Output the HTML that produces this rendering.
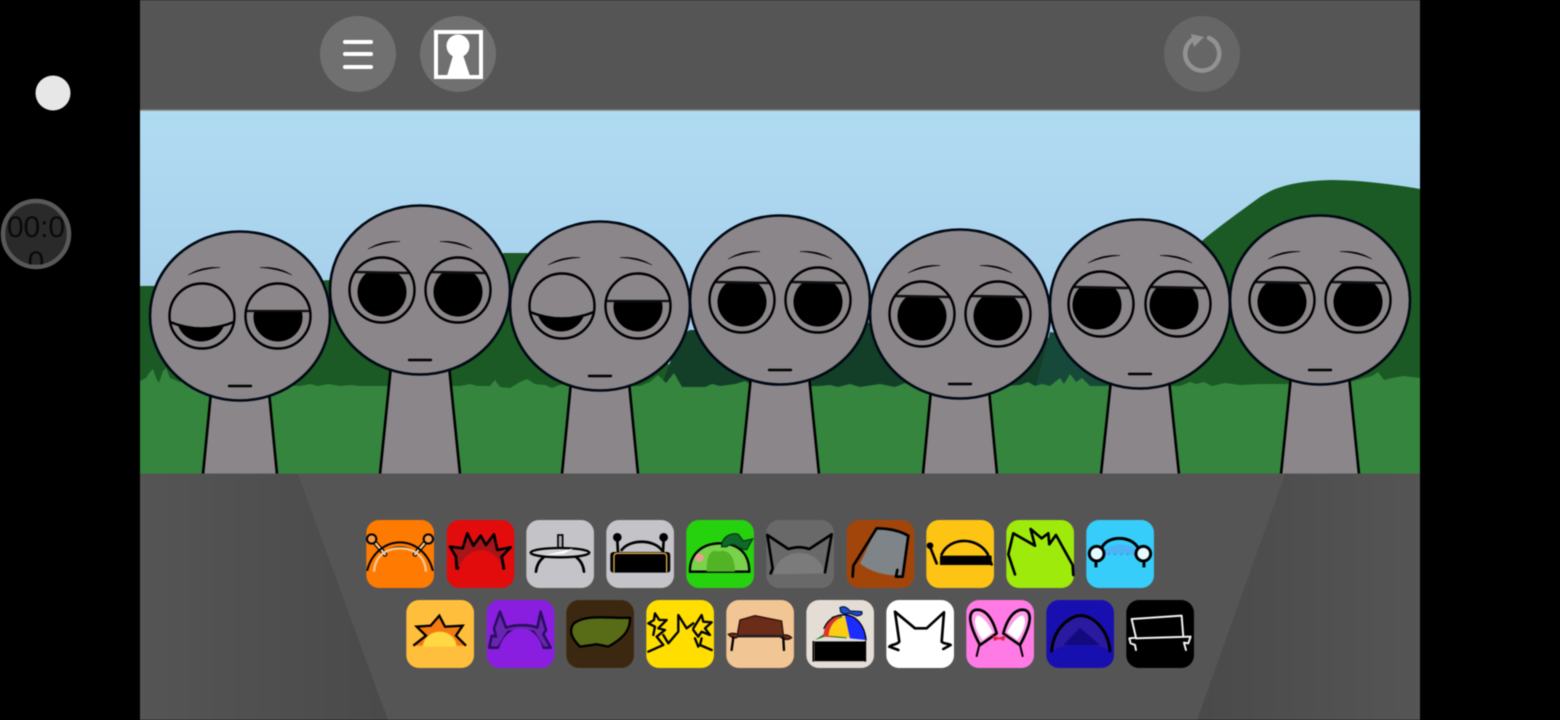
<!DOCTYPE html>
<html lang="en"><head><meta charset="utf-8"><title>Sprunki</title>
<style>
html,body{margin:0;padding:0;background:#000;width:1560px;height:720px;overflow:hidden}
svg{display:block;filter:blur(.45px)}
.s{fill:none;stroke:#000;stroke-width:8;stroke-linecap:round;stroke-linejoin:round}
</style></head><body>
<svg width="1560" height="720" viewBox="0 0 1560 720" xmlns="http://www.w3.org/2000/svg">
<defs>
<linearGradient id="sky" x1="0" y1="0" x2="0" y2="1"><stop offset="0" stop-color="#b0dcf2"/><stop offset="1" stop-color="#a0c4e6"/></linearGradient>
<linearGradient id="gl" x1="0" y1="0" x2="1" y2="0"><stop offset="0" stop-color="#555"/><stop offset="1" stop-color="#4a4a4a"/></linearGradient>
<linearGradient id="gr" x1="0" y1="0" x2="1" y2="0"><stop offset="0" stop-color="#4a4a4a"/><stop offset="1" stop-color="#555"/></linearGradient>
<clipPath id="tc"><circle cx="36" cy="234" r="31"/></clipPath>
<g id="head">
<ellipse cx="0" cy="0" rx="90" ry="84.5" fill="#8a8689" stroke="#000814" stroke-width="2.6"/>
<path d="M-52,-41 Q-38,-50 -20,-48.5 Q-37,-47.5 -52,-41Z M20,-48.5 Q38,-50 52,-41 Q37,-47.5 20,-48.5Z" fill="#000" stroke="#000" stroke-width=".4"/>
<path d="M-11,70 H11" stroke="#000" stroke-width="2.4" stroke-linecap="round"/>
</g>
<g id="eyeN">
<circle r="33" fill="#8a8689"/>
<circle cx="0" cy="2" r="24.5" fill="#000"/>
<path d="M-28.3,-17 A33,33 0 0 1 28.3,-17Z" fill="#8a8689"/>
<path d="M-27,-18 L27,-17" stroke="#111" stroke-width="2.4"/>
<circle r="32.5" fill="none" stroke="#000" stroke-width="2.4"/>
</g>
<g id="eyeW">
<circle r="33" fill="#8a8689"/>
<circle cx="-4" cy="1" r="24.5" fill="#000"/>
<path d="M-28.3,-17 A33,33 0 0 1 28.3,-17Z" fill="#8a8689"/>
<path d="M-27,-17 L27,-16" stroke="#111" stroke-width="2.4"/>
<circle r="32.5" fill="none" stroke="#000" stroke-width="2.4"/>
</g>
<g id="eyeH">
<circle r="33" fill="#8a8689"/>
<circle cx="0" cy="1" r="24.5" fill="#000"/>
<path d="M-32.6,-5 A33,33 0 0 1 32.6,-5Z" fill="#8a8689"/>
<path d="M-32,-5 H32" stroke="#111" stroke-width="2.2"/>
<circle r="32.5" fill="none" stroke="#000" stroke-width="2.4"/>
</g>
<g id="eyeC">
<circle r="33" fill="#8a8689"/>
<circle cx="-1" cy="1" r="24.5" fill="#000"/>
<path d="M32,5 A33,33 0 1 0 -32,5 Q0,18 32,5Z" fill="#8a8689"/>
<path d="M-32,6 Q0,19 32,6" fill="none" stroke="#000" stroke-width="2.4"/>
<circle r="32.5" fill="none" stroke="#000" stroke-width="2.4"/>
</g>
</defs>

<rect width="1560" height="720" fill="#000"/>
<!-- top bar -->
<rect x="140" y="0" width="1280" height="110" fill="#565556"/>
<circle cx="358" cy="54" r="38" fill="#707070"/>
<g fill="#fff"><rect x="343" y="40" width="30" height="4" rx="2"/><rect x="343" y="52" width="30" height="4" rx="2"/><rect x="343" y="65" width="30" height="4" rx="2"/></g>
<circle cx="458" cy="54" r="38" fill="#707070"/>
<rect x="436" y="32" width="45" height="45" fill="none" stroke="#fff" stroke-width="4"/>
<circle cx="458" cy="46" r="11.5" fill="#fff"/>
<path d="M454,52 H462 L470,76 H447Z" fill="#fff"/>
<circle cx="1202" cy="54" r="38" fill="#666"/>
<path d="M1209,38 A17,17 0 1 1 1192,40" fill="none" stroke="#929292" stroke-width="4.5" stroke-linecap="round"/>
<path d="M1191,34 L1204,37 L1194,47Z" fill="#929292"/>

<!-- scene -->
<rect x="140" y="110" width="1280" height="364" fill="url(#sky)"/>
<rect x="140" y="109.5" width="1280" height="1.5" fill="#8f9090"/>
<path d="M140,286 L250,285 L330,280 L420,262 L505,253 L527,253 L580,290 L640,330 L690,390 H140Z" fill="#1b5a24"/>
<path d="M660,390 L680,335 L690,330 L760,330 L880,322 L960,330 L1040,332 L1120,390Z" fill="#133f28"/>
<path d="M1035,390 L1050,332 L1110,340 L1130,390Z" fill="#17493a"/>
<path d="M1120,390 C1150,310 1175,265 1203,240 C1225,222 1245,208 1260,197 C1275,187 1295,181 1330,180 C1355,180 1385,183 1420,189 V390Z" fill="#1b5a24"/>
<path d="M140,381 L146,378 L150,372 L153,369 L156,378 L159,383 L163,371 L166,368 L170,378 L180,382 L300,386 L310,384 L318,386 L328,384 L340,386 L350,385 L360,386 L460,386 L470,384 L478,386 L490,386 L495,380 L500,387 L510,388 L520,382 L527,379 L535,384 L545,385 L552,388 L560,385 L575,381 L582,386 L592,382 L600,386 L640,386 L650,382 L658,375 L666,383 L674,373 L682,387 L705,387 L712,384 L720,386 L735,384 L745,381 L755,387 L820,386 L830,385 L838,387 L850,384 L860,387 L880,384 L895,387 L905,383 L915,386 L1000,386 L1020,385 L1028,382 L1035,386 L1042,384 L1050,386 L1060,378 L1064,384 L1070,374 L1076,382 L1082,378 L1090,386 L1180,386 L1190,382 L1196,384 L1204,382 L1212,386 L1225,383 L1240,385 L1260,384 L1290,384 L1350,382 L1372,376 L1378,372 L1384,380 L1392,378 L1404,376 L1420,378 V474 H140Z" fill="#35853f"/>

<!-- characters -->
<g stroke="#000" stroke-width="2.6" fill="#8a8689">
<path d="M211,390 L202,474 H278 L269,390Z" stroke="none"/><path d="M211,392 L203,474 M269,392 L277,474" fill="none"/>
<path d="M391,364 L380,474 H460 L449,364Z" stroke="none"/><path d="M391,366 L380,474 M449,366 L460,474" fill="none"/>
<path d="M571,380 L562,474 H638 L629,380Z" stroke="none"/><path d="M571,382 L562,474 M629,382 L638,474" fill="none"/>
<path d="M751,374 L741,474 H819 L809,374Z" stroke="none"/><path d="M751,376 L741,474 M809,376 L819,474" fill="none"/>
<path d="M931,388 L923,474 H997 L989,388Z" stroke="none"/><path d="M931,390 L923,474 M989,390 L997,474" fill="none"/>
<path d="M1111,378 L1101,474 H1179 L1169,378Z" stroke="none"/><path d="M1111,380 L1101,474 M1169,380 L1179,474" fill="none"/>
<path d="M1291,374 L1281,474 H1359 L1349,374Z" stroke="none"/><path d="M1291,376 L1281,474 M1349,376 L1359,474" fill="none"/>
</g>
<g transform="translate(240,316)"><use href="#head"/><use href="#eyeC" x="-38"/><use href="#eyeH" x="38"/></g>
<g transform="translate(420,290)"><use href="#head"/><use href="#eyeN" x="-38"/><use href="#eyeN" x="38"/></g>
<g transform="translate(600,306)"><use href="#head"/><use href="#eyeC" x="-38"/><use href="#eyeH" x="38"/></g>
<g transform="translate(780,300)"><use href="#head"/><use href="#eyeN" x="-38"/><use href="#eyeN" x="38"/></g>
<g transform="translate(960,314)"><use href="#head"/><use href="#eyeN" x="-38"/><use href="#eyeN" x="38"/></g>
<g transform="translate(1140,304)"><use href="#head"/><use href="#eyeW" x="-39"/><use href="#eyeW" x="38"/></g>
<g transform="translate(1320,300)"><use href="#head"/><use href="#eyeN" x="-38"/><use href="#eyeN" x="38"/></g>

<!-- bottom panel -->
<rect x="140" y="473.5" width="1280" height="246.5" fill="#565556"/>
<path d="M140,474 H298 L388,720 H140Z" fill="url(#gl)"/>
<path d="M1285,474 H1420 V720 H1197Z" fill="url(#gr)"/>

<!-- left overlay -->
<circle cx="53" cy="93" r="17.5" fill="#e8e7e8"/>
<circle cx="36" cy="234" r="33" fill="#2a2a2a" stroke="#595959" stroke-width="4.5"/>
<g clip-path="url(#tc)" fill="#0a0a0a" font-family="'Liberation Sans',sans-serif" font-size="30"><text x="36" y="237" text-anchor="middle" textLength="58">00:0</text><text x="36" y="272" text-anchor="middle">0</text></g>

<!-- row 1 tiles A -->
<g transform="translate(360,515) scale(.3333)">
<rect x="19" y="15" width="203" height="204" rx="38" fill="#ff7a00"/>
<rect x="260" y="15" width="203" height="204" rx="38" fill="#e20c0c"/>
<rect x="499" y="15" width="203" height="204" rx="38" fill="#c3c3c8"/>
<rect x="739" y="15" width="203" height="204" rx="38" fill="#c3c3c8"/>
<rect x="979" y="15" width="203" height="204" rx="38" fill="#26d20e"/>
<!-- 1 -->
<path d="M45,83 L75,118 M195,83 L165,118" stroke="#000" stroke-width="14" stroke-linecap="round"/>
<path d="M45,83 L75,118 M195,83 L165,118" stroke="#f7c896" stroke-width="7" stroke-linecap="round"/>
<g class="s" style="stroke-width:6">
<circle cx="35" cy="72" r="14" style="fill:#f59a45"/><circle cx="205" cy="72" r="14" style="fill:#f59a45"/>
<path d="M22,165 C35,115 75,82 120,82 C165,82 205,115 218,165"/>
<path d="M75,112 C100,92 140,92 165,112"/>
</g>
<path d="M42,170 C45,125 75,100 120,100 C165,100 195,125 198,170" fill="none" stroke="#f7c896" stroke-width="7"/>
<!-- 2 -->
<path class="s" style="fill:#a81418" d="M290,160 L288,125 L270,95 L308,100 L322,55 L340,92 L362,62 L378,90 L402,58 L412,105 L452,97 L425,125 L432,160 L400,160 C390,125 330,125 320,160Z"/>
<path d="M295,172 C300,122 345,105 362,105 C385,105 425,122 428,172Z" fill="#e20c0c"/>
<path class="s" d="M290,160 L288,125 M432,160 L425,125"/>
<!-- 3 -->
<rect x="594" y="60" width="14" height="44" fill="#aaa" stroke="#000" stroke-width="5"/>
<ellipse cx="600" cy="113" rx="88" ry="14" fill="#cfcfd3" stroke="#000" stroke-width="7"/>
<path d="M550,122 L640,100 L612,116Z" fill="#fff"/>
<path class="s" d="M528,170 C530,150 540,135 552,126 M672,170 C670,150 660,135 648,126"/>
<!-- 4 -->
<circle cx="772" cy="67" r="13"/><circle cx="911" cy="67" r="13"/>
<path class="s" d="M772,75 L774,112 M911,75 L909,112 M785,105 C810,72 880,72 905,105"/>
<rect x="752" y="112" width="178" height="60" rx="8" fill="#000" stroke="#000" stroke-width="2"/>
<path d="M762,172 V125 Q762,115 772,115 H910 Q920,115 920,125 V172" fill="none" stroke="#e0ad4a" stroke-width="4"/>
<!-- 5 -->
<path d="M990,170 C988,115 1030,85 1080,85 C1140,85 1168,120 1168,170Z" fill="#79d24a" stroke="#000" stroke-width="7"/>
<path d="M1040,170 C1040,125 1050,100 1075,110 C1105,100 1125,125 1125,170Z" fill="#52b327"/>
<circle cx="1018" cy="128" r="13" fill="#e8a090"/>
<path d="M1085,95 C1085,65 1115,52 1135,58 L1150,78 L1178,72 L1160,104 C1135,105 1125,75 1100,95Z" fill="#0f6a2a" stroke="#0a3a1a" stroke-width="4"/>
</g>

<!-- row 1 tiles B -->
<g transform="translate(760,515) scale(.3333)">
<rect x="19" y="15" width="203" height="204" rx="38" fill="#696969"/>
<rect x="260" y="15" width="203" height="204" rx="38" fill="#a1450a"/>
<rect x="499" y="15" width="203" height="204" rx="38" fill="#fdc414"/>
<rect x="739" y="15" width="203" height="204" rx="38" fill="#9eea0a"/>
<rect x="979" y="15" width="203" height="204" rx="38" fill="#36cdfb"/>
<!-- 6 -->
<path d="M40,178 C55,95 175,90 195,175Z" fill="#7b7b7b"/>
<path class="s" d="M32,175 L38,160 L22,60 L85,102 C110,95 125,95 148,102 L215,58 L195,172"/>
<!-- 7 -->
<path d="M300,145 L350,40 C385,40 420,48 445,62 L425,180 C380,185 330,170 300,145Z" fill="#7e8488"/>
<path class="s" d="M278,185 L280,152 L350,40 C385,40 420,48 445,62 L428,185 L408,185 L412,165"/>
<!-- 8 -->
<circle cx="510" cy="92" r="10"/>
<path class="s" d="M510,95 L522,125 L530,145 M545,118 C570,65 650,65 682,115 L695,148"/>
<rect x="540" y="122" width="155" height="28" fill="#000"/>
<!-- 9 -->
<path class="s" d="M765,178 L745,118 L760,55 L825,92 L812,42 L845,70 L865,55 L868,88 L888,60 L938,150 L940,180"/>
<!-- 10 -->
<path d="M1025,118 C1040,78 1120,78 1140,118Z" fill="#4cb4f4"/>
<path d="M1025,118 H1140" stroke="#3b8fdc" stroke-width="5" stroke-dasharray="5 14"/>
<path class="s" d="M1025,100 C1040,60 1115,60 1135,100" style="stroke-width:9"/>
<circle cx="1010" cy="116" r="22" fill="#e4faff" stroke="#000" stroke-width="9"/>
<circle cx="1150" cy="116" r="22" fill="#e4faff" stroke="#000" stroke-width="9"/>
<path d="M1008,136 V157 M1152,136 V157" stroke="#000" stroke-width="9"/>
</g>

<!-- row 2 tiles A -->
<g transform="translate(400,595) scale(.3333)">
<rect x="19" y="15" width="203" height="204" rx="38" fill="#ffbe3b"/>
<rect x="260" y="15" width="203" height="204" rx="38" fill="#8a1ee0"/>
<rect x="499" y="15" width="203" height="204" rx="38" fill="#3c2810"/>
<rect x="739" y="15" width="203" height="204" rx="38" fill="#ffde00"/>
<rect x="979" y="15" width="203" height="204" rx="38" fill="#f2c594"/>
<!-- 11 -->
<path d="M40,152 L78,122 L50,95 L92,92 L118,62 L135,95 L188,92 L168,122 L198,152Z" fill="#f47a10"/>
<path d="M40,152 L78,122 L50,95 L92,92 L118,62 L135,95 L188,92 L168,122 L198,152" fill="none" stroke="#000" stroke-width="7" stroke-linejoin="miter"/>
<path d="M68,155 C75,95 165,95 170,155Z" fill="#ffd843"/>
<!-- 12 -->
<path class="s" style="fill:#6a25b0;stroke:#2a1060" d="M268,158 L275,122 L288,125 L282,100 L300,50 L318,98 C345,88 390,88 412,98 L422,50 L438,105 L430,118 L452,158 L430,158 L400,110 H325 L295,158Z"/>
<path d="M295,170 C305,115 345,100 362,100 C385,100 420,115 430,170Z" fill="#8a1ee0"/>
<!-- 13 -->
<path d="M522,85 C560,55 640,72 690,68 C692,105 670,130 625,155 L590,148 L540,155 C515,130 505,105 522,85Z" fill="#586b16" stroke="#000" stroke-width="7" stroke-linejoin="round"/>
<!-- 14 -->
<path class="s" style="stroke-width:7" d="M745,170 L790,150 L770,125 L795,105 L775,100 L800,75 L778,75 L765,55 L762,75 L745,85 L765,95 L760,120 M790,120 L805,145 L835,110 L835,60 L860,100 L880,85 M880,100 L905,60 L910,80 L935,82 L915,100 L930,120 L905,110 L895,125 L880,105 M935,165 L900,150 L905,130 M895,155 L885,130"/>
<!-- 15 -->
<path d="M985,118 Q1000,112 1012,118 L1020,75 L1065,62 L1145,78 L1150,120 Q1165,118 1175,128 Q1160,140 1140,125 H1015 Q1000,135 985,118Z" fill="#6b2c18" stroke="#2a1008" stroke-width="4"/>
<path d="M1012,122 H1148" stroke="#182428" stroke-width="5"/>
<path class="s" d="M995,165 L1000,128 M1152,165 L1150,128" style="stroke-width:7"/>
</g>

<!-- row 2 tiles B -->
<g transform="translate(800,595) scale(.3333)">
<rect x="19" y="15" width="203" height="204" rx="38" fill="#e4ddd6"/>
<rect x="259" y="15" width="203" height="204" rx="38" fill="#fff"/>
<rect x="499" y="15" width="203" height="204" rx="38" fill="#ff7ae4"/>
<rect x="739" y="15" width="203" height="204" rx="38" fill="#180fb0"/>
<rect x="979" y="15" width="203" height="204" rx="38" fill="#000"/>
<!-- 16 -->
<path d="M45,135 L75,115 L85,120 L95,65 L125,60 L140,130 L75,125Z" fill="#1f7a1f"/>
<path d="M70,125 C72,90 90,65 120,60 L100,125Z" fill="#d8362c"/>
<path d="M85,122 C90,90 105,70 135,65 L150,128Z" fill="#ffcc14"/>
<path d="M135,62 C170,60 195,90 198,135 L150,130Z" fill="#1b2cff"/>
<path class="s" style="stroke-width:4" d="M72,100 C85,70 110,58 135,60 C170,60 195,95 198,135"/>
<path d="M120,38 Q135,30 150,48 L185,50 Q190,62 170,62 L150,55 Q130,60 122,50Z" fill="#1f50c8" stroke="#0a1a50" stroke-width="4"/>
<rect x="42" y="138" width="154" height="62" fill="#000" stroke="#d8d2cc" stroke-width="3"/>
<path d="M40,138 V200 M196,138 V200" stroke="#000" stroke-width="5"/>
<!-- 17 -->
<path class="s" d="M268,155 C275,148 290,150 298,140 L285,50 L345,100 L380,100 L432,52 L425,140 C432,148 445,145 452,150 L430,162 M268,155 L295,165"/>
<!-- 18 -->
<path d="M590,115 C575,60 550,40 525,45 C500,55 510,95 540,150 Q570,130 590,115Z" fill="#ff9dea" stroke="#000" stroke-width="8"/>
<path d="M610,115 C625,60 650,40 675,45 C700,55 690,95 660,150 Q630,130 610,115Z" fill="#ff9dea" stroke="#000" stroke-width="8"/>
<path d="M530,62 C518,80 530,110 548,135 C560,125 570,118 578,112 C565,85 545,60 530,62Z M670,62 C682,80 670,110 652,135 C640,125 630,118 622,112 C635,85 655,60 670,62Z" fill="#fff"/>
<path d="M578,122 L598,128 L618,120 L612,138 L598,132 L582,138Z" fill="#e0284a"/>
<path class="s" style="stroke-width:6" d="M530,183 L538,150 M668,183 L660,150"/>
<!-- 19 -->
<path d="M758,168 C760,100 810,62 842,62 C880,62 925,105 930,168 C890,140 800,140 758,168Z" fill="#2a1aa0"/>
<path d="M790,150 L840,98 L900,150Z" fill="#140a80"/>
<path class="s" style="stroke-width:9" d="M755,168 C760,100 810,62 842,62 C880,62 925,105 930,168"/>
<!-- 20 -->
<path class="s" style="stroke:#f2f2f2;stroke-width:6" d="M995,72 L1145,62 L1150,125 M995,72 L1008,128 L988,130 L992,145 L1005,150 L1008,165 M1008,130 L1172,125 L1165,145 L1152,143 L1158,165"/>
</g>
</svg>
</body></html>
